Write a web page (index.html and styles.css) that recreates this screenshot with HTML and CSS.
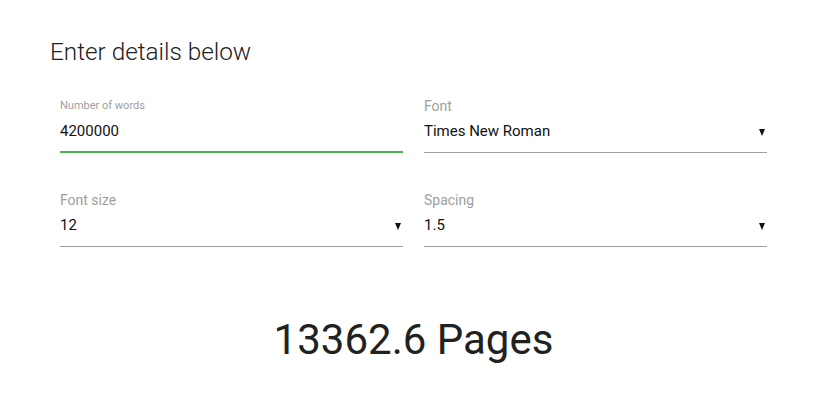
FILE: index.html
```html
<!DOCTYPE html>
<html>
<head>
<meta charset="utf-8">
<link rel="stylesheet" href="styles.css">
</head>
<body>
<div class="page">
  <h1 class="title">Enter details below</h1>
  <div class="form">
    <div class="fields">
      <div class="field field-active">
        <div class="label label-small">Number of words</div>
        <div class="value">4200000</div>
      </div>
      <div class="field">
        <div class="label">Font</div>
        <div class="value">Times New Roman<span class="arrow"></span></div>
      </div>
      <div class="field">
        <div class="label">Font size</div>
        <div class="value">12<span class="arrow"></span></div>
      </div>
      <div class="field">
        <div class="label">Spacing</div>
        <div class="value">1.5<span class="arrow"></span></div>
      </div>
    </div>
    <div class="result">13362.6 Pages</div>
  </div>
</div>
</body>
</html>
```
FILE: styles.css
```css
html, body {
  margin: 0;
  padding: 0;
  background: #fff;
}
body {
  font-family: Roboto, "Liberation Sans", sans-serif;
  color: #212121;
}
.page {
  padding: 36px 53px 0 50px;
}
.title {
  margin: 0;
  font-size: 24.3px;
  font-weight: 300;
  line-height: 32px;
  color: #212121;
}
.form {
  padding-left: 10px;
}
.fields {
  display: grid;
  grid-template-columns: 343px 343px;
  column-gap: 21px;
  row-gap: 39px;
  margin-top: 30px;
}
.field {
  border-bottom: 1px solid #9e9e9e;
  padding-bottom: 11px;
}
.field-active {
  border-bottom: 2px solid #4caf50;
  padding-bottom: 10px;
}
.label {
  font-size: 14px;
  line-height: 16px;
  color: #9e9e9e;
  margin-bottom: 7px;
}
.label-small {
  font-size: 11px;
  color: #9e9e9e;
}
.value {
  display: flex;
  justify-content: space-between;
  align-items: center;
  font-size: 15px;
  line-height: 20px;
  color: #111;
}
.arrow {
  width: 0;
  height: 0;
  border-left: 3.5px solid transparent;
  border-right: 3.5px solid transparent;
  border-top: 7px solid #111;
  margin-right: 2px;
  margin-top: 2px;
}
.result {
  margin-top: 68px;
  text-align: center;
  font-size: 42px;
  line-height: 50px;
  color: #212121;
}
```
